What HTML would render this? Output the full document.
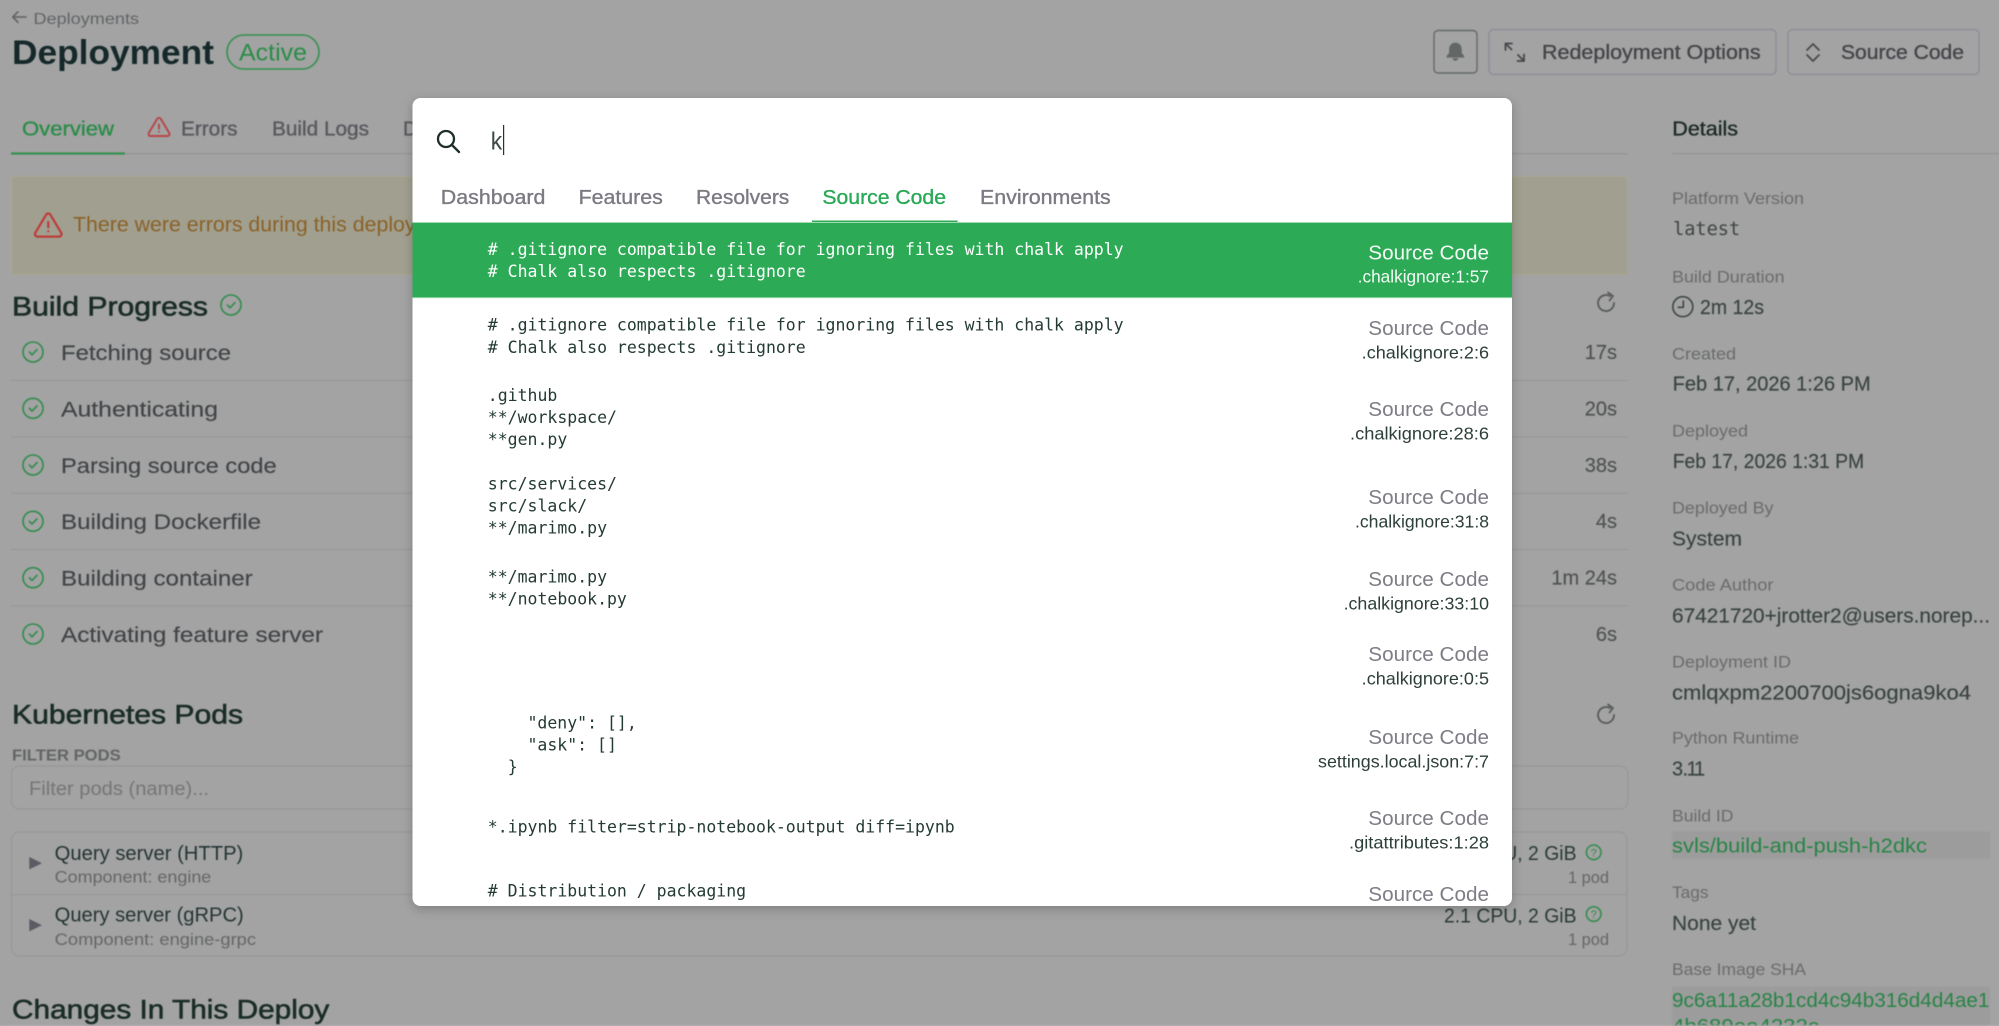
<!DOCTYPE html>
<html lang="en">
<head>
<meta charset="utf-8">
<title>Deployment</title>
<style>
html,body{margin:0;padding:0;background:#a3a3a3;width:1999px;height:1026px;overflow:hidden}
svg{display:block}
text{font-family:"Liberation Sans",sans-serif;fill:currentColor;white-space:pre}
.m{stroke:currentColor;stroke-width:.35}
.s{stroke:currentColor;stroke-width:.6}
.code{font-family:"DejaVu Sans Mono","Liberation Mono",monospace;font-size:16.5px;color:#243a34}
.lb{font-size:17px;color:#6a6b6c}
.val{font-size:20px;color:#38433f;stroke:currentColor;stroke-width:.15}
.t20{font-size:20px}
.row{font-size:21px;color:#414447;stroke:currentColor;stroke-width:.15}
.dur{font-size:20px;color:#4f5251;stroke:currentColor;stroke-width:.15}
.sc{font-size:20px;color:#7d7d85}
.fn{font-size:17.5px;color:#2d3f3a}
.ic{fill:none;stroke-linecap:round;stroke-linejoin:round}
</style>
</head>
<body>
<svg xmlns="http://www.w3.org/2000/svg" width="1999" height="1026" viewBox="0 0 1999 1026">
<defs>
<filter id="b" x="0" y="0" width="100%" height="100%" color-interpolation-filters="sRGB"><feGaussianBlur stdDeviation=".65"/></filter>
<filter id="b2" x="0" y="0" width="100%" height="100%" color-interpolation-filters="sRGB"><feGaussianBlur stdDeviation=".3"/></filter>
<filter id="sh" x="-5%" y="-5%" width="110%" height="110%" color-interpolation-filters="sRGB"><feDropShadow dx="0" dy="3" stdDeviation="5" flood-color="#000" flood-opacity=".22"/></filter>
<g id="ck" class="ic"><circle cx="0" cy="0" r="10"/><path d="M-3.6 0l2.6 2.8l5-5.2"/></g>
<path id="tri" class="ic" d="M12 9v4M10.363 3.591l-8.106 13.534a1.914 1.914 0 0 0 1.636 2.871h16.214a1.914 1.914 0 0 0 1.636-2.87l-8.106-13.536a1.914 1.914 0 0 0-3.274 0zM12 16h.01"/>
</defs>

<rect width="1999" height="1026" fill="#a3a3a3"/>

<!-- page behind the dialog -->
<g filter="url(#b)">
  <!-- header -->
  <path class="ic" d="M26 17H13M18 11.7L12.7 17L18 22.3" stroke="#5f6363" stroke-width="1.6"/>
  <text x="33.5" y="24" font-size="16" color="#626466" textLength="105.5" lengthAdjust="spacingAndGlyphs">Deployments</text>
  <text x="12" y="64" font-size="34" font-weight="700" color="#15282a" textLength="202" lengthAdjust="spacingAndGlyphs">Deployment</text>
  <rect x="227" y="35" width="92" height="34" rx="17" fill="none" stroke="#35904f" stroke-width="1.6"/>
  <text x="239" y="60.5" font-size="24" color="#2a8c48" textLength="68" lengthAdjust="spacingAndGlyphs">Active</text>

  <!-- header buttons -->
  <rect x="1434" y="30.5" width="43" height="42.5" rx="4" fill="none" stroke="#666a6a" stroke-width="1.4"/>
  <path fill="#626767" d="M1455.4 42.8c-4.6 0-6.3 3.5-6.3 7v3.2l-2.5 3v1.6h17.6V56l-2.5-3v-3.2c0-3.5-1.7-7-6.3-7zM1452.6 58.2h5.6a2.8 2.6 0 0 1-5.6 0z"/>
  <rect x="1489" y="29.5" width="287" height="45" rx="5" fill="none" stroke="#8c8c96" stroke-width="1.3"/>
  <path class="ic" stroke="#47474c" stroke-width="1.8" d="M1505.5 50V43.5H1512M1505.5 43.5L1511.5 49.5M1524 54.5V61H1517.5M1524 61L1518 55"/>
  <text class="m t20" x="1542" y="59" color="#45454a" textLength="218.6" lengthAdjust="spacingAndGlyphs">Redeployment Options</text>
  <rect x="1788" y="29.5" width="191" height="45" rx="5" fill="none" stroke="#8c8c96" stroke-width="1.3"/>
  <path class="ic" stroke="#47474c" stroke-width="1.7" d="M1807 50L1813 44L1819 50M1807 55L1813 61L1819 55"/>
  <text class="m t20" x="1841" y="59" color="#45454a" textLength="123" lengthAdjust="spacingAndGlyphs">Source Code</text>

  <!-- tabs -->
  <rect x="11" y="153" width="1617" height="1.4" fill="#969696"/>
  <rect x="1672" y="153" width="327" height="1.4" fill="#969696"/>
  <rect x="11" y="152.4" width="114" height="2.2" fill="#35904f"/>
  <text class="m t20" x="22" y="135.7" color="#2a8c48" textLength="92" lengthAdjust="spacingAndGlyphs">Overview</text>
  <use href="#tri" transform="translate(146.4 115) scale(1.05)" stroke="#b94444" stroke-width="1.8"/>
  <text class="m t20" x="181" y="135.7" color="#58585e" textLength="56.5" lengthAdjust="spacingAndGlyphs">Errors</text>
  <text class="m t20" x="272" y="135.7" color="#58585e" textLength="97" lengthAdjust="spacingAndGlyphs">Build Logs</text>
  <text class="m t20" x="403" y="135.7" color="#58585e">Details</text>
  <text class="m t20" x="1672.3" y="135.7" color="#1a2a26" textLength="65.7" lengthAdjust="spacingAndGlyphs">Details</text>

  <!-- warning banner -->
  <rect x="11.5" y="176.5" width="1616" height="98" rx="3" fill="#a1a090" stroke="#aaa78e"/>
  <use href="#tri" transform="translate(32.3 210) scale(1.33)" stroke="#be3c3a" stroke-width="1.7"/>
  <text x="73" y="231.7" font-size="21" color="#8a6128" textLength="390" lengthAdjust="spacingAndGlyphs">There were errors during this deployment</text>

  <!-- build progress -->
  <text class="s" x="12" y="315.7" font-size="27" color="#1a2c27" textLength="196" lengthAdjust="spacingAndGlyphs">Build Progress</text>
  <use href="#ck" x="231" y="305" stroke="#2f8c4a" stroke-width="1.6"/>
  <path class="ic" stroke="#565a59" stroke-width="1.8" d="M1614 303a8 8 0 1 1-4-6.9M1608 292.5l5 3.5l-3.5 4.5"/>

  <g stroke="#2f8c4a" stroke-width="1.6">
    <use href="#ck" x="33" y="352"/><use href="#ck" x="33" y="408.3"/><use href="#ck" x="33" y="465"/>
    <use href="#ck" x="33" y="521.3"/><use href="#ck" x="33" y="577.7"/><use href="#ck" x="33" y="634"/>
  </g>
  <text class="row" x="61" y="360" textLength="170" lengthAdjust="spacingAndGlyphs">Fetching source</text>
  <text class="row" x="61" y="416.4" textLength="157" lengthAdjust="spacingAndGlyphs">Authenticating</text>
  <text class="row" x="61" y="472.8" textLength="215.7" lengthAdjust="spacingAndGlyphs">Parsing source code</text>
  <text class="row" x="61" y="529.2" textLength="200" lengthAdjust="spacingAndGlyphs">Building Dockerfile</text>
  <text class="row" x="61" y="585.6" textLength="191.7" lengthAdjust="spacingAndGlyphs">Building container</text>
  <text class="row" x="61" y="642" textLength="262" lengthAdjust="spacingAndGlyphs">Activating feature server</text>
  <g fill="#969696">
    <rect x="11" y="380" width="1617" height="1"/><rect x="11" y="436.4" width="1617" height="1"/>
    <rect x="11" y="492.8" width="1617" height="1"/><rect x="11" y="549" width="1617" height="1"/>
    <rect x="11" y="605.4" width="1617" height="1"/>
  </g>
  <g text-anchor="end">
    <text class="dur" x="1617" y="359">17s</text>
    <text class="dur" x="1617" y="415.4">20s</text>
    <text class="dur" x="1617" y="471.8">38s</text>
    <text class="dur" x="1617" y="528.2">4s</text>
    <text class="dur" x="1617" y="584.6">1m 24s</text>
    <text class="dur" x="1617" y="641">6s</text>
  </g>

  <!-- kubernetes pods -->
  <text class="s" x="12" y="723.3" font-size="27" color="#1a2c27" textLength="231" lengthAdjust="spacingAndGlyphs">Kubernetes Pods</text>
  <path class="ic" stroke="#565a59" stroke-width="1.8" d="M1614 715a8 8 0 1 1-4-6.9M1608 704.5l5 3.5l-3.5 4.5"/>
  <text x="12" y="760.7" font-size="15.5" font-weight="700" color="#636565" textLength="108.7" lengthAdjust="spacingAndGlyphs">FILTER PODS</text>
  <rect x="11.5" y="766" width="1616.5" height="43" rx="8" fill="none" stroke="#969696"/>
  <text x="29" y="795" font-size="19" color="#767676" textLength="180" lengthAdjust="spacingAndGlyphs">Filter pods (name)...</text>

  <rect x="11.5" y="832" width="1615.5" height="124" rx="8" fill="none" stroke="#969696"/>
  <rect x="12" y="894" width="1615" height="1" fill="#969696"/>
  <path fill="#5b5b63" d="M29.3 857v12.4L42 863.2zM29.3 919v12.4L42 925.2z"/>
  <text x="54.7" y="860" font-size="20" color="#253434" textLength="188.6" lengthAdjust="spacingAndGlyphs">Query server (HTTP)</text>
  <text x="54.7" y="882.7" font-size="17" color="#656667" textLength="156.6" lengthAdjust="spacingAndGlyphs">Component: engine</text>
  <text x="54.7" y="921.7" font-size="20" color="#253434" textLength="189" lengthAdjust="spacingAndGlyphs">Query server (gRPC)</text>
  <text x="54.7" y="945" font-size="17" color="#656667" textLength="201.3" lengthAdjust="spacingAndGlyphs">Component: engine-grpc</text>

  <text x="1444" y="860" font-size="20" color="#2a3a37" textLength="132.5" lengthAdjust="spacingAndGlyphs">2.1 CPU, 2 GiB</text>
  <text x="1444" y="922.3" font-size="20" color="#2a3a37" textLength="132.5" lengthAdjust="spacingAndGlyphs">2.1 CPU, 2 GiB</text>
  <circle cx="1593.7" cy="852.3" r="7.3" fill="none" stroke="#2f8c4a" stroke-width="1.5"/>
  <text x="1593.7" y="856.3" font-size="11" color="#2f8c4a" text-anchor="middle">?</text>
  <circle cx="1593.7" cy="914" r="7.3" fill="none" stroke="#2f8c4a" stroke-width="1.5"/>
  <text x="1593.7" y="918" font-size="11" color="#2f8c4a" text-anchor="middle">?</text>
  <text x="1568" y="883" font-size="17" color="#656667" textLength="41" lengthAdjust="spacingAndGlyphs">1 pod</text>
  <text x="1568" y="945" font-size="17" color="#656667" textLength="41" lengthAdjust="spacingAndGlyphs">1 pod</text>

  <text class="s" x="12" y="1018.3" font-size="27" color="#1a2c27" textLength="317.3" lengthAdjust="spacingAndGlyphs">Changes In This Deploy</text>

  <!-- details -->
  <text class="lb" x="1672" y="204" textLength="132" lengthAdjust="spacingAndGlyphs">Platform Version</text>
  <text x="1673" y="235" style="font-family:'DejaVu Sans Mono',monospace;font-size:18.6px" color="#3f4443">latest</text>

  <text class="lb" x="1672" y="282.7" textLength="112.6" lengthAdjust="spacingAndGlyphs">Build Duration</text>
  <g class="ic" stroke="#3c4744" stroke-width="1.6"><circle cx="1682.8" cy="306.7" r="10"/><path d="M1683.3 301v6.3h-5"/></g>
  <text class="val" x="1700" y="314" textLength="64" lengthAdjust="spacingAndGlyphs">2m 12s</text>

  <text class="lb" x="1672" y="359.3" textLength="64" lengthAdjust="spacingAndGlyphs">Created</text>
  <text class="val" x="1672.7" y="390.7" textLength="198" lengthAdjust="spacingAndGlyphs">Feb 17, 2026 1:26 PM</text>

  <text class="lb" x="1672" y="436.4" textLength="76" lengthAdjust="spacingAndGlyphs">Deployed</text>
  <text class="val" x="1672.7" y="468" textLength="191.5" lengthAdjust="spacingAndGlyphs">Feb 17, 2026 1:31 PM</text>

  <text class="lb" x="1672" y="513.5" textLength="101.5" lengthAdjust="spacingAndGlyphs">Deployed By</text>
  <text class="val" x="1672" y="545.5" textLength="70" lengthAdjust="spacingAndGlyphs">System</text>

  <text class="lb" x="1672" y="590.6" textLength="101.5" lengthAdjust="spacingAndGlyphs">Code Author</text>
  <text class="val" x="1672" y="622.6" textLength="318" lengthAdjust="spacingAndGlyphs">67421720+jrotter2@users.norep...</text>

  <text class="lb" x="1672" y="667.7" textLength="119" lengthAdjust="spacingAndGlyphs">Deployment ID</text>
  <text class="val" x="1672" y="699.7" textLength="299" lengthAdjust="spacingAndGlyphs">cmlqxpm2200700js6ogna9ko4</text>

  <text class="lb" x="1672" y="743.7" textLength="127" lengthAdjust="spacingAndGlyphs">Python Runtime</text>
  <text class="val" x="1672 1682.5 1686.5 1694" y="775.7">3.11</text>

  <text class="lb" x="1672" y="821.7" textLength="61.5" lengthAdjust="spacingAndGlyphs">Build ID</text>
  <rect x="1672" y="831.7" width="318" height="27.3" fill="#9c9c9c"/>
  <text x="1672" y="852.3" font-size="20" color="#278445" textLength="255" lengthAdjust="spacingAndGlyphs">svls/build-and-push-h2dkc</text>

  <text class="lb" x="1672" y="898" textLength="36.6" lengthAdjust="spacingAndGlyphs">Tags</text>
  <text class="val" x="1672" y="930" textLength="84" lengthAdjust="spacingAndGlyphs">None yet</text>

  <text class="lb" x="1672" y="975" textLength="134" lengthAdjust="spacingAndGlyphs">Base Image SHA</text>
  <rect x="1672" y="986.7" width="318" height="40" fill="#9c9c9c"/>
  <text x="1672" y="1007" font-size="20" color="#278445" textLength="317.4" lengthAdjust="spacingAndGlyphs">9c6a11a28b1cd4c94b316d4d4ae1</text>
  <text x="1672" y="1033" font-size="20" color="#278445" textLength="147" lengthAdjust="spacingAndGlyphs">4b689ee4232c</text>
  <rect x="0" y="1025" width="1999" height="1" fill="#b0b0b0"/>
</g>

<!-- search dialog -->
<rect x="412.5" y="98" width="1099.5" height="808" rx="8" fill="#fff" filter="url(#sh)"/>
<g class="ic" stroke="#1e2f2a" stroke-width="2.3"><circle cx="446" cy="139" r="8"/><path d="M452 145L459 152"/></g>
<text x="490.8" y="149.3" font-size="25" color="#3a4a47" textLength="11.4" lengthAdjust="spacingAndGlyphs">k</text>
<rect x="503" y="125" width="1.2" height="30" fill="#24342f"/>

<g filter="url(#b2)">
<text class="m t20" x="440.8" y="204" color="#7a7a82" textLength="104.6" lengthAdjust="spacingAndGlyphs">Dashboard</text>
<text class="m t20" x="578.6" y="204" color="#7a7a82" textLength="84.2" lengthAdjust="spacingAndGlyphs">Features</text>
<text class="m t20" x="696" y="204" color="#7a7a82" textLength="93.3" lengthAdjust="spacingAndGlyphs">Resolvers</text>
<text class="m t20" x="822.4" y="204" color="#2aa956" textLength="123.6" lengthAdjust="spacingAndGlyphs">Source Code</text>
<text class="m t20" x="980" y="204" color="#7a7a82" textLength="130.7" lengthAdjust="spacingAndGlyphs">Environments</text>
<rect x="812" y="220.5" width="145.6" height="2" fill="#2caa56"/>

<!-- selected row -->
<rect x="412.5" y="222" width="1099.5" height="76" fill="#2caa56"/>
<rect x="412.5" y="222" width="1099.5" height=".8" fill="#bfe6cc"/>
<rect x="412.5" y="297.4" width="1099.5" height=".8" fill="#bfe6cc"/>
<text class="code" x="487.8" y="255" style="color:#fff"># .gitignore compatible file for ignoring files with chalk apply</text>
<text class="code" x="487.8" y="277" style="color:#fff"># Chalk also respects .gitignore</text>
<text x="1368.3" y="259.4" font-size="20" color="#f2faf5" textLength="120.7" lengthAdjust="spacingAndGlyphs">Source Code</text>
<text x="1357.7" y="282.7" font-size="17.5" color="#f2faf5" textLength="131.3" lengthAdjust="spacingAndGlyphs">.chalkignore:1:57</text>

<!-- result rows -->
<text class="code" x="487.8" y="330.7"># .gitignore compatible file for ignoring files with chalk apply</text>
<text class="code" x="487.8" y="353"># Chalk also respects .gitignore</text>
<text class="sc" x="1368.3" y="335" textLength="120.7" lengthAdjust="spacingAndGlyphs">Source Code</text>
<text class="fn" x="1361.7" y="358.3" textLength="127.3" lengthAdjust="spacingAndGlyphs">.chalkignore:2:6</text>

<text class="code" x="487.8" y="401">.github</text>
<text class="code" x="487.8" y="423">**/workspace/</text>
<text class="code" x="487.8" y="445">**gen.py</text>
<text class="sc" x="1368.3" y="416" textLength="120.7" lengthAdjust="spacingAndGlyphs">Source Code</text>
<text class="fn" x="1350" y="439.3" textLength="139" lengthAdjust="spacingAndGlyphs">.chalkignore:28:6</text>

<text class="code" x="487.8" y="489.5">src/services/</text>
<text class="code" x="487.8" y="511.5">src/slack/</text>
<text class="code" x="487.8" y="533.5">**/marimo.py</text>
<text class="sc" x="1368.3" y="504" textLength="120.7" lengthAdjust="spacingAndGlyphs">Source Code</text>
<text class="fn" x="1355" y="527.3" textLength="134" lengthAdjust="spacingAndGlyphs">.chalkignore:31:8</text>

<text class="code" x="487.8" y="582.5">**/marimo.py</text>
<text class="code" x="487.8" y="604.5">**/notebook.py</text>
<text class="sc" x="1368.3" y="586" textLength="120.7" lengthAdjust="spacingAndGlyphs">Source Code</text>
<text class="fn" x="1343.6" y="609.3" textLength="145.4" lengthAdjust="spacingAndGlyphs">.chalkignore:33:10</text>

<text class="sc" x="1368.3" y="661" textLength="120.7" lengthAdjust="spacingAndGlyphs">Source Code</text>
<text class="fn" x="1361.7" y="684.3" textLength="127.3" lengthAdjust="spacingAndGlyphs">.chalkignore:0:5</text>

<text class="code" x="527.5" y="728.3">"deny": [],</text>
<text class="code" x="527.5" y="750.3">"ask": []</text>
<text class="code" x="507.7" y="772.3">}</text>
<text class="sc" x="1368.3" y="744" textLength="120.7" lengthAdjust="spacingAndGlyphs">Source Code</text>
<text class="fn" x="1318" y="767.3" textLength="171" lengthAdjust="spacingAndGlyphs">settings.local.json:7:7</text>

<text class="code" x="487.8" y="832.3">*.ipynb filter=strip-notebook-output diff=ipynb</text>
<text class="sc" x="1368.3" y="825" textLength="120.7" lengthAdjust="spacingAndGlyphs">Source Code</text>
<text class="fn" x="1349" y="848.3" textLength="140" lengthAdjust="spacingAndGlyphs">.gitattributes:1:28</text>

<text class="code" x="487.8" y="896.7"># Distribution / packaging</text>
<text class="sc" x="1368.3" y="901" textLength="120.7" lengthAdjust="spacingAndGlyphs">Source Code</text>
</g>
</svg>
</body>
</html>
